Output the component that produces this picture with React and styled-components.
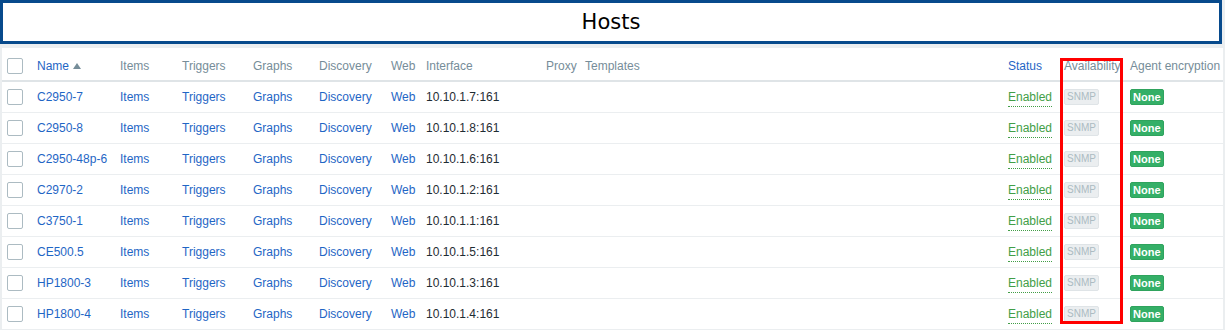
import React from 'react'
import styled, { createGlobalStyle } from 'styled-components'

const GlobalStyle = createGlobalStyle`
    html, body {
        margin: 0;
        padding: 0;
        background: #ebeef0;
    }
    body {
        font-family: "Liberation Sans", Arial, sans-serif;
        font-size: 12px;
    }
`

const Page = styled.div`
    width: 1225px;
    height: 330px;
    overflow: hidden;
    position: relative;
`

const TitleBar = styled.div`
    box-sizing: border-box;
    width: 1222px;
    height: 44px;
    border: 3px solid #074a8c;
    background: #fff;
    display: flex;
    align-items: center;
    justify-content: center;
    font-family: "DejaVu Sans", Verdana, sans-serif;
    font-size: 21px;
    color: #000;
`

const TableWrap = styled.div`
    margin: 4px 2px 0 2px;
    background: #fff;
`

const Table = styled.table`
    width: 1221px;
    border-collapse: collapse;
    table-layout: fixed;
`

const Th = styled.th`
    height: 33px;
    padding: 3px 5px 0 5px;
    box-sizing: border-box;
    text-align: left;
    font-weight: normal;
    color: ${p => (p.$link ? '#1f66c5' : '#768d99')};
    white-space: nowrap;
    overflow: hidden;
    border-bottom: 2px solid #dfe4e7;
`

const Tr = styled.tr`
    border-bottom: 1px solid #ebeef0;
`

const Td = styled.td`
    height: 30px;
    padding: 0 5px;
    white-space: nowrap;
    color: #1f2c33;
`

const Link = styled.span`
    color: #1f66c5;
`

const Arrow = styled.span`
    display: inline-block;
    width: 0;
    height: 0;
    margin-left: 4px;
    border-left: 4px solid transparent;
    border-right: 4px solid transparent;
    border-bottom: 6px solid #768d99;
    vertical-align: 1px;
`

const Check = styled.span`
    display: block;
    box-sizing: border-box;
    width: 16px;
    height: 16px;
    border: 1px solid #acbbc2;
    border-radius: 2px;
    background: #fff;
`

const Status = styled.span`
    color: #429e47;
    border-bottom: 1px dotted #429e47;
    padding-bottom: 2px;
`

const Tag = styled.span`
    display: inline-block;
    box-sizing: border-box;
    height: 16px;
    line-height: 14px;
    padding: 0 2px;
    font-size: ${p => (p.$green ? '11px' : '10px')};
    border-radius: 2px;
    border: 1px solid ${p => (p.$green ? '#2fa35d' : '#dfe4e7')};
    background: ${p => (p.$green ? '#34af67' : '#ebeef0')};
    color: ${p => (p.$green ? '#fff' : '#acbbc2')};
    font-weight: ${p => (p.$green ? 'bold' : 'normal')};
`

const Highlight = styled.div`
    position: absolute;
    left: 1060px;
    top: 58px;
    width: 63px;
    height: 266px;
    box-sizing: border-box;
    border: 3px solid #ff0000;
    pointer-events: none;
`

const widths = [30, 83, 62, 71, 66, 72, 35, 120, 39, 423, 56, 66, 98]

const hosts = [
    ['C2950-7', '10.10.1.7:161'],
    ['C2950-8', '10.10.1.8:161'],
    ['C2950-48p-6', '10.10.1.6:161'],
    ['C2970-2', '10.10.1.2:161'],
    ['C3750-1', '10.10.1.1:161'],
    ['CE500.5', '10.10.1.5:161'],
    ['HP1800-3', '10.10.1.3:161'],
    ['HP1800-4', '10.10.1.4:161'],
]

export default function App() {
    return (
        <Page>
            <GlobalStyle />
            <TitleBar>Hosts</TitleBar>
            <TableWrap>
                <Table>
                    <colgroup>
                        {widths.map((w, i) => <col key={i} style={{ width: w }} />)}
                    </colgroup>
                    <thead>
                        <tr>
                            <Th><Check /></Th>
                            <Th $link>Name<Arrow /></Th>
                            <Th>Items</Th>
                            <Th>Triggers</Th>
                            <Th>Graphs</Th>
                            <Th>Discovery</Th>
                            <Th>Web</Th>
                            <Th>Interface</Th>
                            <Th>Proxy</Th>
                            <Th>Templates</Th>
                            <Th $link>Status</Th>
                            <Th>Availability</Th>
                            <Th>Agent encryption</Th>
                        </tr>
                    </thead>
                    <tbody>
                        {hosts.map(([name, iface]) => (
                            <Tr key={name}>
                                <Td><Check /></Td>
                                <Td><Link>{name}</Link></Td>
                                <Td><Link>Items</Link></Td>
                                <Td><Link>Triggers</Link></Td>
                                <Td><Link>Graphs</Link></Td>
                                <Td><Link>Discovery</Link></Td>
                                <Td><Link>Web</Link></Td>
                                <Td>{iface}</Td>
                                <Td></Td>
                                <Td></Td>
                                <Td><Status>Enabled</Status></Td>
                                <Td><Tag>SNMP</Tag></Td>
                                <Td><Tag $green>None</Tag></Td>
                            </Tr>
                        ))}
                    </tbody>
                </Table>
            </TableWrap>
            <Highlight />
        </Page>
    )
}
